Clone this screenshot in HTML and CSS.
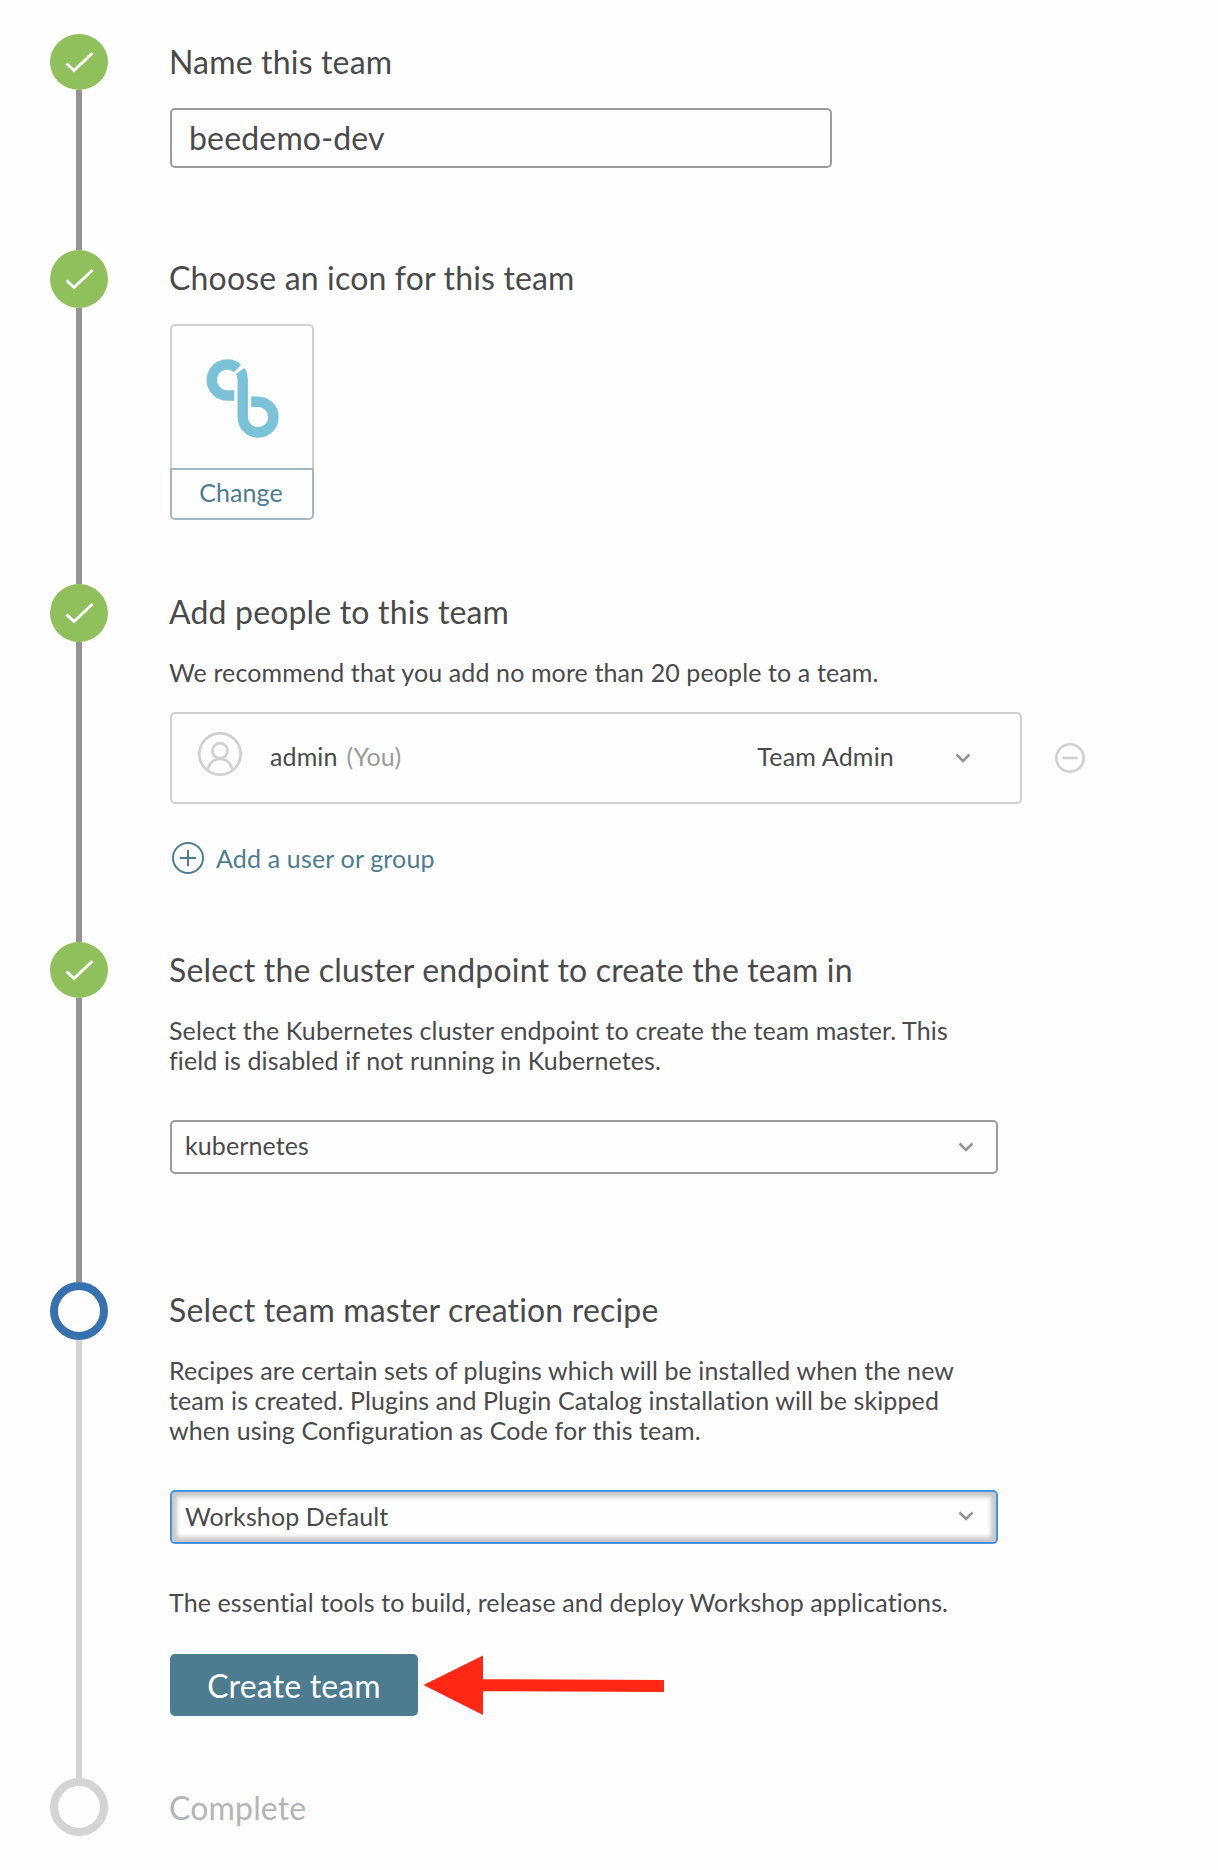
FILE: index.html
```html
<!DOCTYPE html>
<html lang="en">
<head>
<meta charset="utf-8">
<title>Create team</title>
<link rel="stylesheet" href="styles.css">
</head>
<body>
<main class="wizard">
  <section class="step step-name done">
    <div class="rail">
      <span class="marker short"><svg class="check" viewBox="0 0 58 56"><path d="M16.500 29.500 24 36.500 42.500 19"/></svg></span>
      <span class="line"></span>
    </div>
    <div class="content">
      <h2 class="title">Name this team</h2>
      <div class="text-input">beedemo-dev</div>
    </div>
  </section>

  <section class="step step-icon done">
    <div class="rail">
      <span class="marker"><svg class="check" viewBox="0 0 58 58"><path d="M16.500 30.500 24 37.500 42.500 20"/></svg></span>
      <span class="line"></span>
    </div>
    <div class="content">
      <h2 class="title">Choose an icon for this team</h2>
      <div class="icon-picker">
        <div class="icon-preview">
          <svg class="logo" viewBox="0 0 74 82" width="74" height="82">
            <path d="M28.300 36.500H21.300A15.500 15.500 0 1 1 31.700 9.500"/>
            <path d="M34.200 11.800Q36.700 15.500 36.700 20.500V58A15.400 15.400 0 1 0 52.100 42.700H45.200"/>
            <path class="logo-gap" d="M27.200 16.200 36.200 7.200"/>
          </svg>
        </div>
        <button class="change">Change</button>
      </div>
    </div>
  </section>

  <section class="step step-people done">
    <div class="rail">
      <span class="marker"><svg class="check" viewBox="0 0 58 58"><path d="M16.500 30.500 24 37.500 42.500 20"/></svg></span>
      <span class="line"></span>
    </div>
    <div class="content">
      <h2 class="title">Add people to this team</h2>
      <p class="text">We recommend that you add no more than 20 people to a team.</p>
      <div class="member-row">
        <div class="member">
          <svg class="avatar" viewBox="0 0 44 44" width="44" height="44"><circle cx="22" cy="22" r="20.700"/><circle cx="22" cy="18.800" r="7.600"/><path d="M9.300 38C11.500 30.500 16 27 22 27S32.500 30.500 34.700 38"/></svg>
          <span class="member-name">admin</span>
          <span class="member-you">(You)</span>
          <span class="member-role">Team Admin</span>
          <svg class="chevron" viewBox="0 0 16 10" width="16" height="10"><path d="M1.500 1.500 8 8 14.500 1.500"/></svg>
        </div>
        <svg class="remove" viewBox="0 0 30 30" width="30" height="30"><circle cx="15" cy="15" r="13.700"/><path d="M7.500 15H22.500"/></svg>
      </div>
      <a class="add-link">
        <svg class="add-icon" viewBox="0 0 32 32" width="32" height="32"><circle cx="16" cy="16" r="15"/><path d="M8 16H24M16 8V24"/></svg>
        <span>Add a user or group</span>
      </a>
    </div>
  </section>

  <section class="step step-endpoint done">
    <div class="rail">
      <span class="marker short"><svg class="check" viewBox="0 0 58 56"><path d="M16.500 29.500 24 36.500 42.500 19"/></svg></span>
      <span class="line"></span>
    </div>
    <div class="content">
      <h2 class="title">Select the cluster endpoint to create the team in</h2>
      <p class="text">Select the Kubernetes cluster endpoint to create the team master. This<br>field is disabled if not running in Kubernetes.</p>
      <div class="select">
        <span class="value">kubernetes</span>
        <svg class="chevron" viewBox="0 0 16 10" width="16" height="10"><path d="M1.500 1.500 8 8 14.500 1.500"/></svg>
      </div>
    </div>
  </section>

  <section class="step step-recipe current">
    <div class="rail">
      <span class="marker"></span>
      <span class="line"></span>
    </div>
    <div class="content">
      <h2 class="title">Select team master creation recipe</h2>
      <p class="text">Recipes are certain sets of plugins which will be installed when the new<br>team is created. Plugins and Plugin Catalog installation will be skipped<br>when using Configuration as Code for this team.</p>
      <div class="select focused">
        <span class="value">Workshop Default</span>
        <svg class="chevron" viewBox="0 0 16 10" width="16" height="10"><path d="M1.500 1.500 8 8 14.500 1.500"/></svg>
      </div>
      <p class="text recipe-note">The essential tools to build, release and deploy Workshop applications.</p>
      <div class="actions">
        <button class="create">Create team</button>
        <svg class="arrow" viewBox="0 0 242 62" width="242" height="62"><path d="M0.500 31 60 1.500V25.200L241 26V38L60 37.200V61Z"/></svg>
      </div>
    </div>
  </section>

  <section class="step pending">
    <div class="rail"><span class="marker"></span></div>
    <div class="content"><h2 class="title">Complete</h2></div>
  </section>
</main>
</body>
</html>
```
FILE: styles.css
```css
* { box-sizing: border-box; }

body {
  margin: 0;
  background: #fefefe;
  color: #4a4a4a;
  font-family: Lato, "Liberation Sans", sans-serif;
  font-size: 25px;
  letter-spacing: 0.11px;
  font-variant-ligatures: none;
}

.wizard { padding: 34px 0 34px 50px; }

.step { display: flex; gap: 62px; }

.rail {
  display: flex;
  flex-direction: column;
  align-items: center;
  flex: none;
  width: 58px;
}

.marker {
  flex: none;
  width: 58px;
  height: 58px;
  border-radius: 50%;
}
.marker.short { height: 56px; }
.done .marker { background: #8fc05c; }
.current .marker { border: 8px solid #3871b0; }
.pending .marker { border: 8px solid #d4d4d4; }

.check { display: block; width: 100%; height: 100%; fill: none; stroke: #fff; stroke-width: 3; }

.line { flex: 1; width: 6px; background: #d4d4d4; }
.done .line { background: #949494; }

.content { flex: none; width: 920px; padding-top: 8px; }

.title {
  margin: 0 0 25px -1px;
  font-size: 32px;
  font-weight: 400;
  line-height: 40px;
  letter-spacing: 0.17px;
  white-space: nowrap;
}
.pending .content { padding-top: 10px; }
.pending .title { color: #b5b5b5; }

.text { margin: 0 0 0 -1px; line-height: 30px; white-space: nowrap; }

.step-name .content { padding-bottom: 82px; }
.step-icon .content { padding-bottom: 64px; }
.step-people .content { padding-bottom: 68px; }
.step-endpoint .content { padding-bottom: 108px; }
.step-recipe .content { padding-bottom: 62px; }

.text-input {
  width: 662px;
  height: 60px;
  margin-top: 26px;
  padding: 0 17px;
  border: 2px solid #9b9b9b;
  border-radius: 5px;
  font-size: 32px;
  line-height: 56px;
  letter-spacing: 0.17px;
}

.icon-picker { width: 144px; margin-top: 26px; }
.icon-preview {
  display: flex;
  align-items: flex-start;
  height: 144px;
  padding: 33px 0 0 34px;
  border: 2px solid #cfcfcf;
  border-bottom: 0;
  border-radius: 5px 5px 0 0;
}
.logo { fill: none; stroke: #7ac2d7; stroke-width: 10.400; }
.logo-gap { stroke: #fefefe; stroke-width: 3; }

.change {
  display: block;
  width: 144px;
  height: 52px;
  padding: 0 2px 4px 0;
  border: 2px solid #a3b8c4;
  border-radius: 0 0 5px 5px;
  background: #fefefe;
  color: #4d7c90;
  font: inherit;
  letter-spacing: inherit;
  line-height: 30px;
}

.member-row { display: flex; align-items: center; gap: 33px; margin-top: 25px; }
.member {
  display: flex;
  align-items: center;
  width: 852px;
  height: 92px;
  padding: 0 49px 0 26px;
  border: 2px solid #cfcfcf;
  border-radius: 5px;
  line-height: 30px;
}
.member span { padding-bottom: 4px; }
.avatar { margin: 0 28px 8px 0; fill: none; stroke: #d0d0d0; stroke-width: 2.700; }
.member-name { margin-right: 9px; }
.member-you { color: #9b9b9b; }
.member-role { margin-left: auto; margin-right: 61px; letter-spacing: 0.2px; }
.chevron { fill: none; stroke: #949494; stroke-width: 2.500; }
.remove { fill: none; stroke: #d0d0d0; stroke-width: 2.600; }

.add-link {
  display: flex;
  align-items: center;
  gap: 12px;
  margin: 38px 0 0 2px;
  height: 32px;
  color: #4d7c90;
  letter-spacing: 0.16px;
}
.add-icon { fill: none; stroke: #4d7c90; stroke-width: 2; }

.select {
  display: flex;
  align-items: center;
  justify-content: space-between;
  width: 828px;
  height: 54px;
  margin-top: 45px;
  padding: 0 22px 0 13px;
  border: 2px solid #9b9b9b;
  border-radius: 5px;
  line-height: 30px;
}
.value { padding-bottom: 5px; }
.select .chevron { margin-bottom: 1px; }
.select.focused {
  border-color: #4990e2;
  box-shadow: inset 0 0 4px 5px #c8c8c8;
}
.focused .value { padding-bottom: 2px; }
.focused .chevron { margin-bottom: 2px; }

.recipe-note { margin-top: 43px; }

.actions { display: flex; gap: 5px; margin-top: 37px; }
.create {
  width: 248px;
  height: 62px;
  padding: 0;
  border: 0;
  border-radius: 5px;
  background: #4d7c90;
  color: #fff;
  font: inherit;
  font-size: 32px;
  letter-spacing: 0.17px;
}
.arrow { fill: #ff2814; }
```
